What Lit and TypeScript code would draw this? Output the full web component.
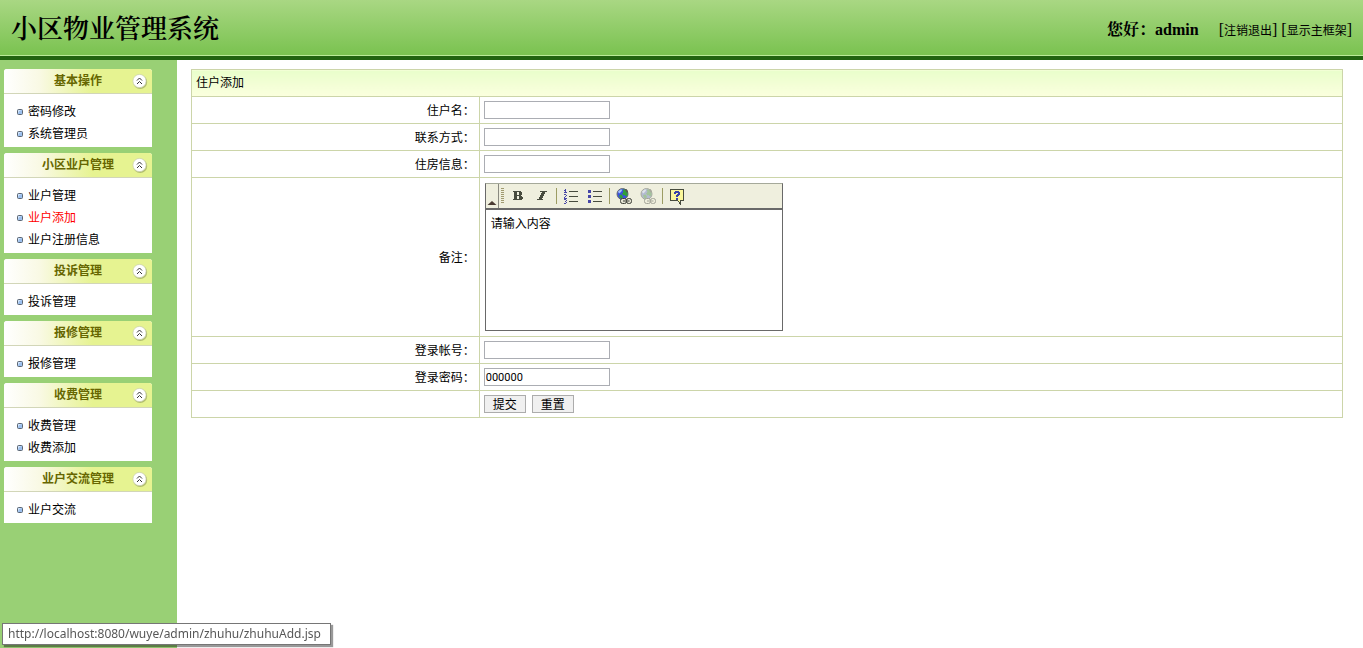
import { LitElement, html, css, svg, nothing } from "lit";
import { customElement } from "lit/decorators.js";
import { classMap } from "lit/directives/class-map.js";

interface MenuGroup {
  title: string;
  items: string[];
}

const MENU: MenuGroup[] = [
  { title: "基本操作", items: ["密码修改", "系统管理员"] },
  { title: "小区业户管理", items: ["业户管理", "业户添加", "业户注册信息"] },
  { title: "投诉管理", items: ["投诉管理"] },
  { title: "报修管理", items: ["报修管理"] },
  { title: "收费管理", items: ["收费管理", "收费添加"] },
  { title: "业户交流管理", items: ["业户交流"] },
];

const ACTIVE = "业户添加";

const chevrons = html`<svg width="18" height="18" viewBox="0 0 18 18">
  <circle cx="9.2" cy="10" r="7" fill="#8d9a55" opacity="0.6" />
  <circle cx="8.5" cy="9" r="6.6" fill="#fff" stroke="#c9cfae" stroke-width="0.7" />
  <path d="M6 8.500L8.500 6L11 8.500M6 12L8.500 9.500L11 12" fill="none" stroke="#333" stroke-width="1" />
</svg>`;

const bullet = html`<svg width="6" height="6" viewBox="0 0 6 6">
  <rect x="0.5" y="0.5" width="5" height="5" rx="1" fill="#9cc0ee" stroke="#5d6672" />
  <path d="M1.5 3.500V1.500H3.500" fill="none" stroke="#d5e6fb" />
</svg>`;

const boldIcon = html`<svg width="16" height="16" viewBox="0 0 16 16" shape-rendering="crispEdges">
  <path fill="#474b3e" fill-rule="evenodd"
    d="M3 3H11V4H12V7H11V8H12V9H13V11H12V12H11V12H3V11H4V4H3ZM7 4V7H9V4ZM7 8V11H9V8Z" />
</svg>`;

const italicIcon = html`<svg width="16" height="16" viewBox="0 0 16 16" shape-rendering="crispEdges">
  <path fill="#474b3e" d="M6 3H13V4H11V6H10V8H9V10H8V11H9V12H3V11H5V9H6V7H7V5H8V4H6Z" />
</svg>`;

const numberedIcon = html`<svg width="16" height="16" viewBox="0 0 16 16" shape-rendering="crispEdges">
  <path fill="#474b3e" d="M6 3H15V4H6ZM6 8H15V9H6ZM6 13H15V14H6Z" />
  <path fill="#4646a8"
    d="M2 1H3V4H4V5H1V4H2V3H1V2H2ZM1 6H3V7H4V8H3V9H2V10H4V11H1V9H2V8H3V7H1ZM1 11H3V12H4V13H3V14H4V15H3V16H1V15H3V14H2V13H3V12H1Z" />
</svg>`;

const bulletedIcon = html`<svg width="16" height="16" viewBox="0 0 16 16" shape-rendering="crispEdges">
  <path fill="#474b3e" d="M6 3H15V4H6ZM6 8H15V9H6ZM6 13H15V14H6Z" />
  <path fill="#4646a8" d="M1 2H4V5H1ZM1 7H4V10H1ZM1 12H4V15H1Z" />
</svg>`;

const globe = (dim: boolean) => html`<svg width="18" height="18" viewBox="0 0 18 18">
  ${svg`<circle cx="7.500" cy="7" r="5.500" fill=${dim ? "#b4bbd2" : "#3a4ee6"} stroke=${dim ? "#a9ab9f" : "#6a6e70"}/>
  <path d="M3 4.500L5.500 2.500H7.500L6 5L4 6.500Z" fill=${dim ? "#dfe3ea" : "#a5c4f6"}/>
  <path d="M7.500 2.500H10.500L12.500 5V8.500L11 9.500L9.500 8L8.500 8.500L7 6.500L8.500 5ZM4 8L6.500 7.500L8 9.500L7 12L5 11Z"
    fill=${dim ? "#a3c39b" : "#2fa03a"}/>
  <path d="M9.500 2H11.500L13 4V5.500H11.500Z" fill=${dim ? "#a9ab9f" : "#555a52"}/>
  <g fill=${dim ? "#eeeedd" : "#e2e2d2"} stroke=${dim ? "#a3a498" : "#3c3e36"}>
    <rect x="5.500" y="11.500" width="6" height="5" rx="2"/>
    <rect x="11.500" y="11.500" width="5" height="5" rx="2"/>
    <path d="M8 14H14.500"/>
  </g>`}
</svg>`;

const helpIcon = html`<svg width="16" height="17" viewBox="0 0 16 17" shape-rendering="crispEdges">
  <path d="M1.5 1.500H14.500V12.500H11.500V16L8.500 12.500H1.500Z" fill="#fbf79a" stroke="#474b3e" />
  <path fill="#3b45a8" d="M5 4H6V3H10V4H11V7H10V8H9V9H7V7H8V6H9V5H7V6H5ZM7 10H9V12H7Z" />
</svg>`;

@customElement("side-menu")
class SideMenu extends LitElement {
  static styles = css`
    :host {
      display: flex;
      flex-direction: column;
      gap: 6px;
    }
    .card {
      background: #fff;
      border-radius: 3px 3px 0 0;
    }
    .head {
      display: grid;
      grid-template-columns: 1fr auto 1fr;
      align-items: center;
      height: 24px;
      border-bottom: 1px solid #d2d6b8;
      border-radius: 3px 3px 0 0;
      background: linear-gradient(to right, #fff 0, #f9f9e4 24%, #e6f391 60%, #e6f391);
    }
    .title {
      grid-column: 2;
      margin: 0;
      font-size: 12px;
      line-height: 24px;
      font-weight: bold;
      color: #666600;
    }
    .toggle {
      justify-self: end;
      display: flex;
      padding: 0;
      margin-right: 3px;
      border: 0;
      background: none;
    }
    .list {
      list-style: none;
      margin: 0;
      padding: 7px 0 2px;
    }
    .item {
      display: flex;
      align-items: center;
      gap: 5px;
      height: 22px;
      padding-left: 13px;
    }
    .link {
      color: #000;
      font-size: 12px;
      text-decoration: none;
    }
    .link.active {
      color: #f00;
    }
  `;

  render() {
    return MENU.map(
      (group) => html`<section class="card">
        <div class="head">
          <h2 class="title">${group.title}</h2>
          <button class="toggle" type="button" aria-label="收起">${chevrons}</button>
        </div>
        <ul class="list">
          ${group.items.map(
            (item) => html`<li class="item">
              ${bullet}<a class=${classMap({ link: true, active: item === ACTIVE })} href="#">${item}</a>
            </li>`
          )}
        </ul>
      </section>`
    );
  }
}

@customElement("note-editor")
class NoteEditor extends LitElement {
  static styles = css`
    :host {
      display: block;
    }
    .editor {
      box-sizing: border-box;
      width: 298px;
      max-width: 100%;
      border: 1px solid #696969;
      border-top-color: #a5a99a;
    }
    .toolbar {
      display: flex;
      align-items: center;
      height: 24px;
      background: #efefde;
      border-bottom: 2px solid #696969;
    }
    .fold {
      display: flex;
      align-items: flex-end;
      justify-content: center;
      width: 13px;
      height: 24px;
      padding: 0 0 2px;
      border: 0;
      border-right: 1px solid #8a8a80;
      background: none;
    }
    .grip {
      width: 3px;
      height: 16px;
      margin: 0 2px;
      background: repeating-linear-gradient(to bottom, #a09a70 0 1px, transparent 1px 2px);
    }
    .tool {
      display: flex;
      align-items: center;
      justify-content: center;
      width: 24px;
      height: 24px;
      padding: 0;
      border: 0;
      background: none;
    }
    .sep {
      width: 1px;
      height: 16px;
      margin: 0 2px;
      background: #9c9c63;
    }
    .area {
      display: block;
      box-sizing: border-box;
      width: 100%;
      height: 120px;
      padding: 5px;
      border: 0;
      outline: 0;
      resize: none;
      font: 12px/18px "Liberation Sans", "Noto Sans CJK SC", sans-serif;
      color: #000;
      background: #fff;
    }
  `;

  render() {
    const tool = (label: string, icon: unknown) =>
      html`<button class="tool" type="button" aria-label=${label}>${icon}</button>`;
    const sep = html`<span class="sep"></span>`;
    return html`<div class="editor">
      <div class="toolbar">
        <button class="fold" type="button" aria-label="折叠工具栏">
          <svg width="10" height="5" viewBox="0 0 10 5"><path d="M5 0L9.500 4H.5Z" fill="#4a3b32" /></svg>
        </button>
        <span class="grip"></span>
        ${tool("加粗", boldIcon)}${tool("倾斜", italicIcon)}${sep}
        ${tool("编号列表", numberedIcon)}${tool("项目列表", bulletedIcon)}${sep}
        ${tool("插入链接", globe(false))}${tool("取消链接", globe(true))}${sep}
        ${tool("帮助", helpIcon)}
      </div>
      <textarea class="area" aria-label="备注" .value=${"请输入内容"}></textarea>
    </div>`;
  }
}

@customElement("app-root")
class AppRoot extends LitElement {
  static styles = css`
    :host {
      display: flex;
      flex-direction: column;
      min-height: 100vh;
      font: 12px/18px "Liberation Sans", "Noto Sans CJK SC", sans-serif;
      color: #000;
    }
    .header {
      display: flex;
      align-items: center;
      justify-content: space-between;
      box-sizing: border-box;
      height: 60px;
      padding: 3px 11px 0;
      border-bottom: 4px solid #216310;
      background: linear-gradient(#a9d783, #79c24f);
      box-shadow: inset 0 -1px #b9ea97;
      font-family: "Liberation Serif", "Noto Serif CJK SC", "Noto Sans CJK SC", serif;
    }
    .brand {
      margin: 0;
      font-size: 26px;
      line-height: 36px;
      font-weight: 600;
    }
    .user {
      display: flex;
      align-items: center;
      gap: 20px;
      font-size: 16px;
      line-height: 24px;
    }
    .out {
      font-family: "Noto Sans CJK SC", sans-serif;
      font-size: 12px;
      color: #000;
      text-decoration: none;
    }
    .body {
      flex: 1;
      display: flex;
    }
    .side {
      box-sizing: border-box;
      width: 177px;
      flex: none;
      padding: 9px 25px 9px 4px;
      background: #99d075;
    }
    .main {
      flex: 1;
      padding: 9px 20px 9px 14px;
    }
    .form {
      width: 100%;
      border-collapse: collapse;
      table-layout: fixed;
    }
    .label-col {
      width: 25%;
    }
    .caption,
    .label,
    .field {
      box-sizing: border-box;
      height: 27px;
      border: 1px solid #ccd5a9;
      padding: 4px;
      line-height: 18px;
      font-weight: normal;
    }
    .caption {
      text-align: left;
      background: linear-gradient(#e9fecb, #fbffde);
    }
    .label {
      padding: 5px 4px 3px;
      text-align: right;
    }
    .row {
      display: flex;
      gap: 6px;
    }
    .note {
      padding: 5px;
    }
    .text {
      display: block;
      box-sizing: border-box;
      width: 126px;
      height: 18px;
      padding: 0 1px;
      border: 1px solid #abadb3;
      font: 11px Roboto, "Noto Sans CJK SC", sans-serif;
      color: #000;
    }
    .btn {
      box-sizing: border-box;
      width: 42px;
      height: 18px;
      padding: 0;
      border: 1px solid #acacac;
      background: #f0f0f0;
      font: 12px/16px "Noto Sans CJK SC", sans-serif;
      color: #000;
    }
    .status {
      position: fixed;
      left: 2px;
      bottom: 3px;
      box-sizing: border-box;
      height: 22px;
      padding: 0 9px 0 5px;
      border: 1px solid #767676;
      background: #fff;
      box-shadow: 2px 2px 1px rgba(0, 0, 0, 0.4);
      font: 12px/20px "Noto Sans", sans-serif;
      color: #575757;
    }
  `;

  private field(id: string, label: string, value = "") {
    return html`<tr>
      <td class="label"><label for=${id}>${label}：</label></td>
      <td class="field"><input class="text" id=${id} type="text" .value=${value} /></td>
    </tr>`;
  }

  render() {
    return html`
      <header class="header">
        <h1 class="brand">小区物业管理系统</h1>
        <div class="user">
          <b>您好：admin</b>
          <span>[<a class="out" href="#">注销退出</a>] [<a class="out" href="#">显示主框架</a>]</span>
        </div>
      </header>
      <div class="body">
        <nav class="side"><side-menu></side-menu></nav>
        <main class="main">
          <form>
            <table class="form">
              <colgroup><col class="label-col" /><col /></colgroup>
              <tr><th class="caption" colspan="2">住户添加</th></tr>
              ${this.field("name", "住户名")} ${this.field("contact", "联系方式")}
              ${this.field("house", "住房信息")}
              <tr>
                <td class="label">备注：</td>
                <td class="field note"><note-editor></note-editor></td>
              </tr>
              ${this.field("account", "登录帐号")} ${this.field("password", "登录密码", "000000")}
              <tr>
                <td class="label">${nothing}</td>
                <td class="field">
                  <div class="row">
                    <button class="btn" type="submit">提交</button>
                    <button class="btn" type="reset">重置</button>
                  </div>
                </td>
              </tr>
            </table>
          </form>
        </main>
      </div>
      <div class="status">http://localhost:8080/wuye/admin/zhuhu/zhuhuAdd.jsp</div>
    `;
  }
}
